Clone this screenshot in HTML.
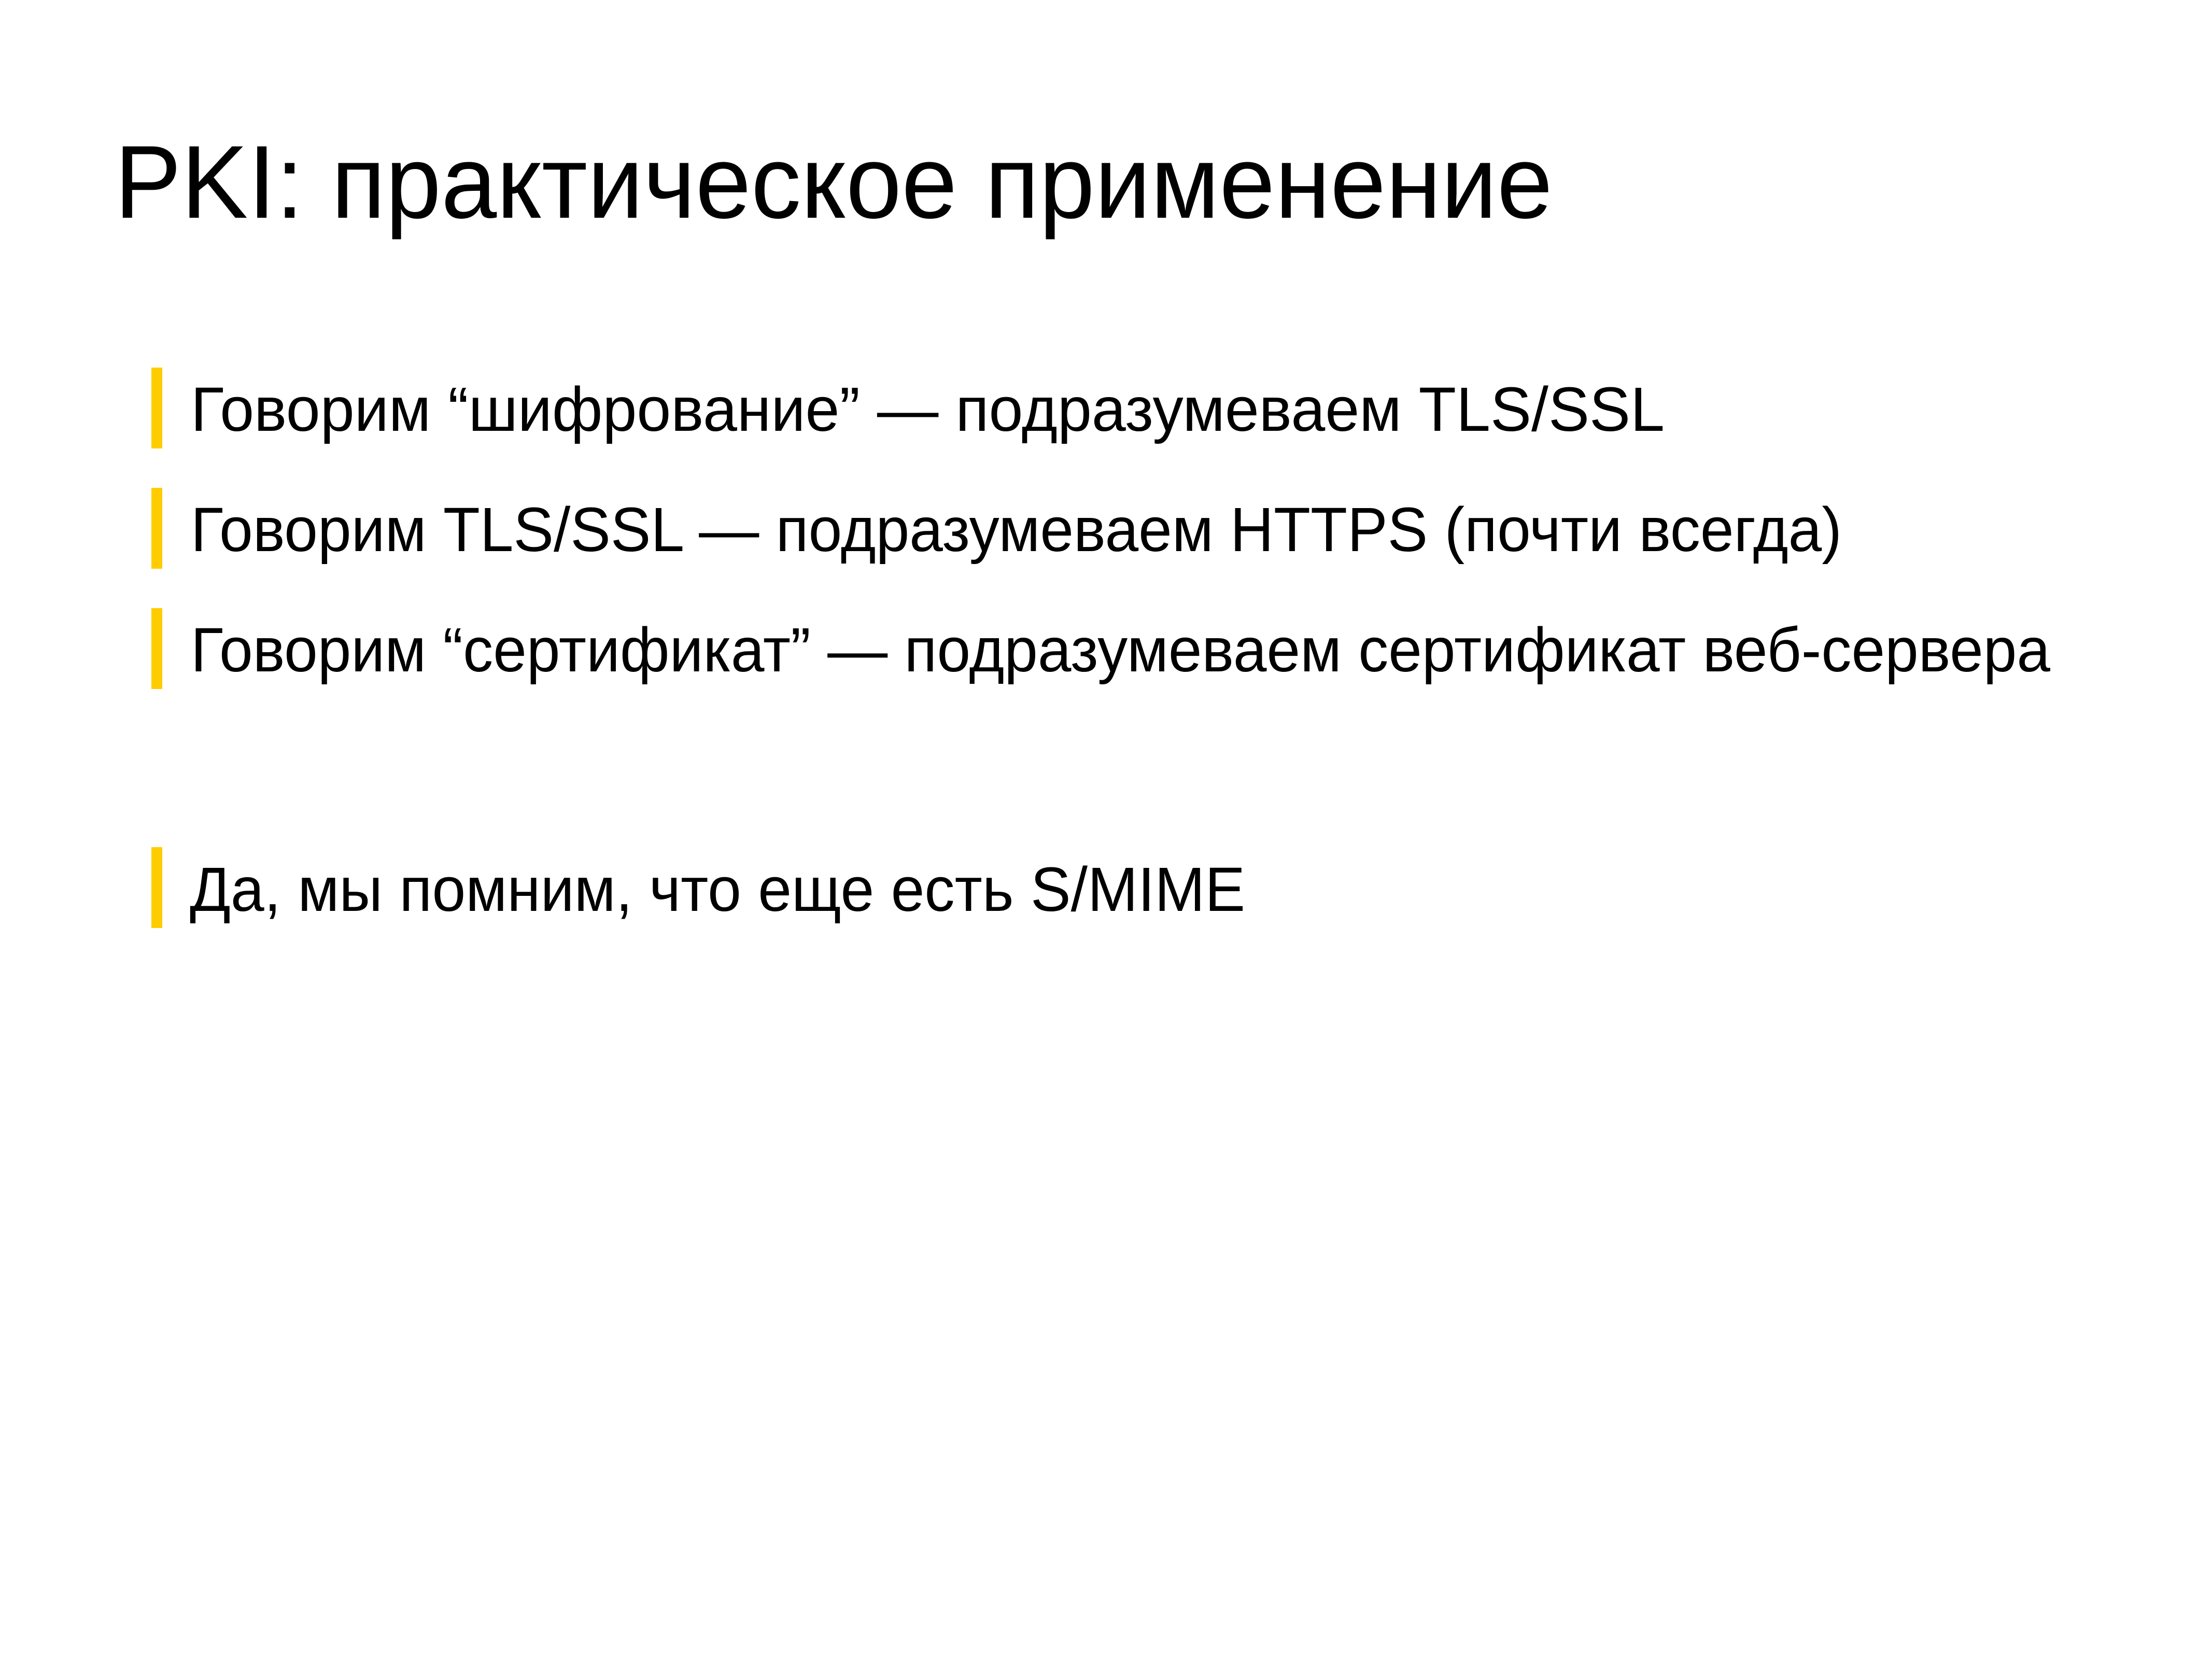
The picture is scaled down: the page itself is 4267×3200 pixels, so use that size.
<!DOCTYPE html>
<html><head><meta charset="utf-8"><style>
html,body{margin:0;padding:0;background:#fff;}
svg{display:block;}
text{font-family:"Liberation Sans","DejaVu Sans",sans-serif;fill:#000;}
</style></head><body>
<svg width="4267" height="3200" viewBox="0 0 4267 3200" xmlns="http://www.w3.org/2000/svg">
<rect width="4267" height="3200" fill="#fff"/>
<text x="221" y="420" font-size="200" textLength="2774" lengthAdjust="spacingAndGlyphs">PKI: практическое применение</text>
<rect x="292" y="709" width="21" height="156" fill="#FFCC00"/>
<text x="368" y="831" font-size="121" textLength="2843" lengthAdjust="spacingAndGlyphs">Говорим “шифрование” — подразумеваем TLS/SSL</text>
<rect x="292" y="941" width="21" height="156" fill="#FFCC00"/>
<text x="368" y="1063" font-size="121" textLength="3185" lengthAdjust="spacingAndGlyphs">Говорим TLS/SSL — подразумеваем HTTPS (почти всегда)</text>
<rect x="292" y="1173" width="21" height="156" fill="#FFCC00"/>
<text x="368" y="1295" font-size="121" textLength="3587" lengthAdjust="spacingAndGlyphs">Говорим “сертификат” — подразумеваем сертификат веб-сервера</text>
<rect x="292" y="1634" width="21" height="156" fill="#FFCC00"/>
<text x="366" y="1757" font-size="121" textLength="2036" lengthAdjust="spacingAndGlyphs">Да, мы помним, что еще есть S/MIME</text>
</svg>
</body></html>
